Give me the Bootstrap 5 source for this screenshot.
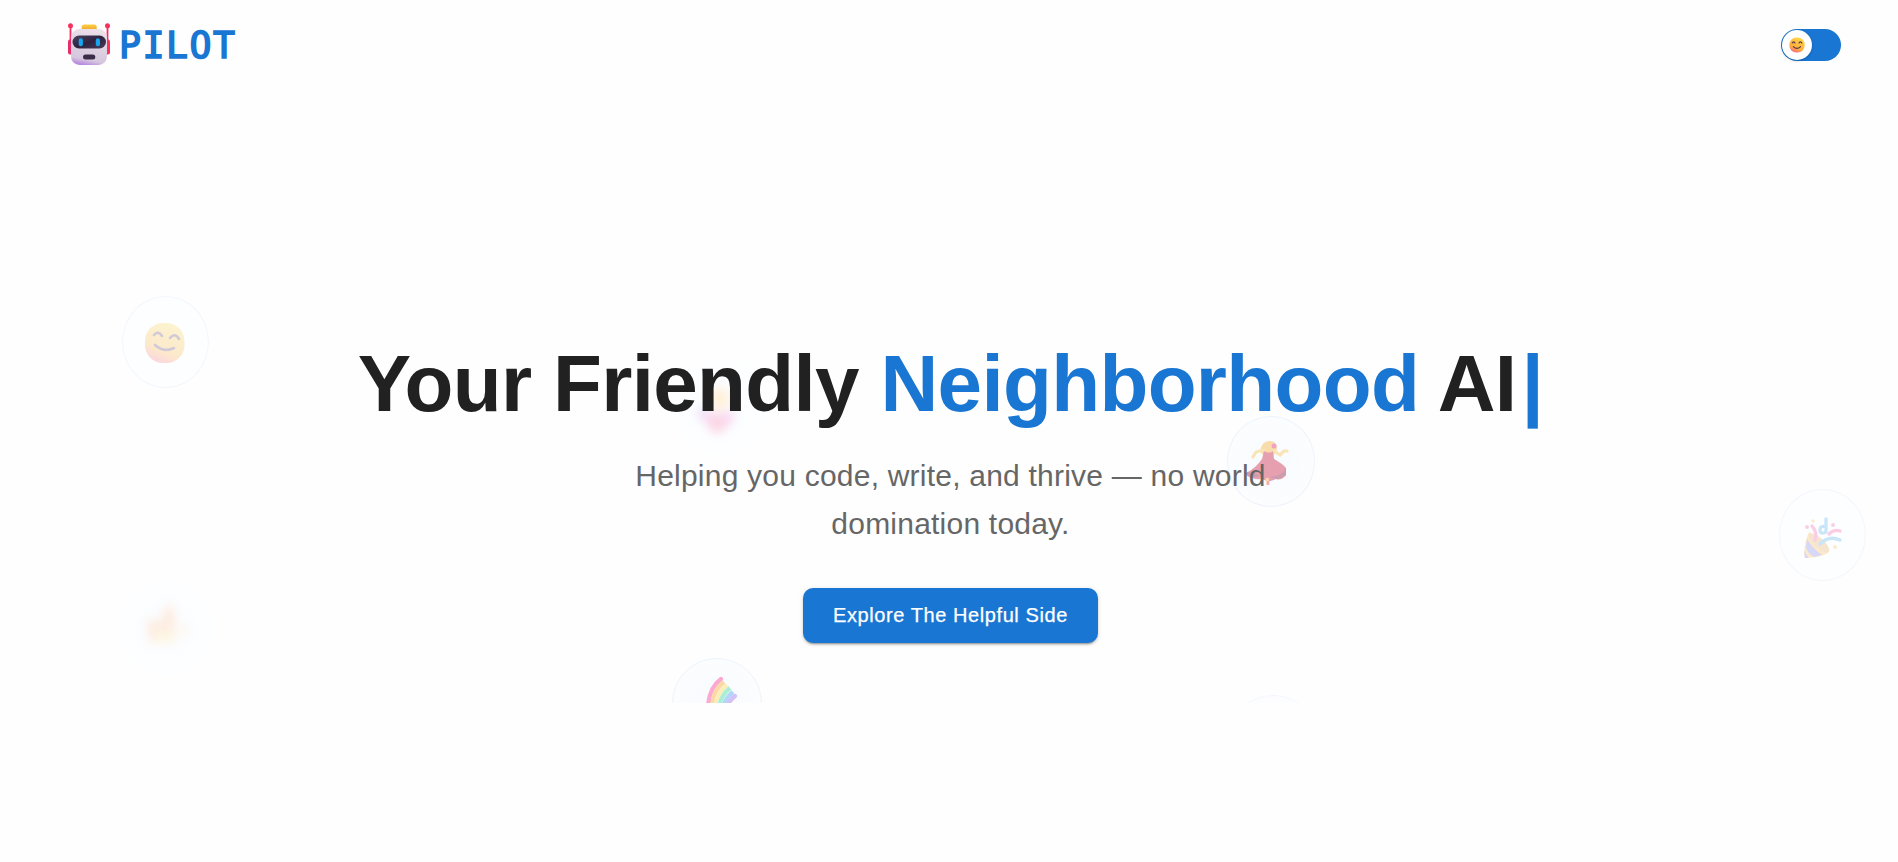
<!DOCTYPE html>
<html lang="en">
<head>
<meta charset="utf-8">
<meta name="viewport" content="width=device-width, initial-scale=1">
<title>Pilot</title>
<link href="https://cdn.jsdelivr.net/npm/bootstrap@5.3.0/dist/css/bootstrap.min.css" rel="stylesheet">
<style>
  body { font-family: "Liberation Sans", Arial, sans-serif; color: #212121; background: #fefefe; overflow: hidden; }
  .topbar { height: 90px; padding: 0 57px 0 66px; }
  .brand-name { font: 400 36.500px/1 "DejaVu Sans Mono", monospace; -webkit-text-stroke: 1.6px #1976d2; color: #1976d2; letter-spacing: 1.5px; margin: 2px 0 0 8px; }
  .mood { width: 60px; height: 32px; background: #1976d2; padding: 1px; }
  .mood-knob { width: 30px; height: 30px; background: #fff; box-shadow: 0 1px 3px rgba(0,0,0,.2); }
  .hero { height: 613px; padding: 246px 0 0 3px; }
  .hero-title { font-size: 80px; font-weight: 700; line-height: 96px; letter-spacing: -.66px; margin: 0 0 20px; }
  .accent { color: #1976d2; }
  .caret { margin-left: 5px; }
  .hero-sub { font-size: 30px; line-height: 48px; letter-spacing: .22px; color: #666; width: 700px; margin-bottom: 40px; }
  .hero-btn { font-size: 20px; line-height: 25px; padding: 15px 25px; border-radius: 10px; letter-spacing: .58px; width: 295px; height: 55px; border: 0;
    -webkit-text-stroke: .25px #fff;
    --bs-btn-bg: #1976d2; --bs-btn-color: #fff; box-shadow: 0 3px 1px -2px rgba(0,0,0,.2), 0 2px 2px rgba(0,0,0,.14), 0 1px 5px rgba(0,0,0,.12); }
  .bubble { border-radius: 50%; border: 1.5px solid #edf4fb; pointer-events: none; }
  .b-smile { left: 122px; top: 206px; width: 87px; height: 92px; }
  .b-dance { left: 1227px; top: 326px; width: 88px; height: 91px; }
  .b-party { left: 1779px; top: 399px; width: 87px; height: 92px; }
  .b-rain { left: 672px; top: 568px; width: 90px; height: 90px; }
  .b-thumb { left: 118px; top: 490px; width: 95px; height: 95px; }
  .b-heart { left: 674px; top: 269px; width: 92px; height: 96px; }
  .b-low { left: 1228px; top: 605px; width: 90px; height: 90px; }
  .b-smile, .b-party { background: #fcfeff; border-color: #f3f7fc; }
  .b-dance, .b-rain { background: radial-gradient(closest-side, #f8fbfe, #fbfdff); }
  .b-thumb, .b-heart { background: radial-gradient(closest-side, #fafcff, #fdfeff 90%); border-color: #fcfeff; }
  .b-low { background: #fdfdff; border-color: #f3f7fd; }
  .f-2 { opacity: .26; } .f-3 { opacity: .43; }
  .soft { filter: blur(5px); }
</style>
</head>
<body>
<nav class="topbar navbar flex-nowrap justify-content-between align-items-center">
  <a class="d-flex align-items-center text-decoration-none" href="#">
    <svg width="45" height="45" viewBox="0 .5 45 45">
      <defs>
        <linearGradient id="gFace" x1=".7" y1="0" x2=".3" y2="1"><stop offset="0" stop-color="#ffd84a"/><stop offset=".7" stop-color="#ffae3a"/><stop offset="1" stop-color="#f8638a"/></linearGradient>
        <linearGradient id="head" x1=".6" y1="0" x2=".4" y2="1"><stop offset="0" stop-color="#ece0ea"/><stop offset=".85" stop-color="#d5c7dd"/><stop offset="1" stop-color="#b98be0"/></linearGradient>
        <linearGradient id="hat" x1="0" y1="0" x2="0" y2="1"><stop offset="0" stop-color="#ffcf45"/><stop offset="1" stop-color="#e89a22"/></linearGradient>
        <linearGradient id="visor" x1="0" y1="0" x2="1" y2="1"><stop offset="0" stop-color="#49425c"/><stop offset=".5" stop-color="#30233f"/><stop offset="1" stop-color="#483b5d"/></linearGradient>
      </defs>
      <path d="M4.500 4v18M41.500 4v18" stroke="#f72c60" stroke-width="1.800"/>
      <circle cx="4.500" cy="3.300" r="2.500" fill="#f5315f"/><circle cx="41.500" cy="3.300" r="2.500" fill="#f5315f"/>
      <rect x="2" y="17" width="6" height="15" rx="2" fill="#e72e68"/><rect x="38" y="17" width="6" height="15" rx="2" fill="#ff315c"/>
      <rect x="15.700" y="2" width="15" height="7" rx="2.500" fill="url(#hat)"/>
      <rect x="5" y="6.500" width="36" height="36" rx="8.500" fill="url(#head)"/>
      <rect x="6.500" y="13" width="33.500" height="13" rx="6.500" fill="url(#visor)"/>
      <rect x="12.700" y="15.800" width="4.200" height="8" rx="2.100" fill="#16a5ee"/><rect x="29.800" y="15.800" width="4.200" height="8" rx="2.100" fill="#16a5ee"/>
      <rect x="17" y="32" width="12.300" height="5" rx="2.500" fill="#3b2d49"/>
    </svg>
    <span class="brand-name">PILOT</span>
  </a>
  <div class="mood rounded-pill">
    <div class="mood-knob rounded-circle d-flex align-items-center justify-content-center">
      <svg width="16" height="16" viewBox="0 0 40 40"><rect x="1" y="1" width="38" height="38" rx="17" fill="url(#gFace)"/><path d="M8 15q3-6 7 0M25 15q4-6 7 0M11 24q9 9 18 0" fill="none" stroke="#593751" stroke-width="3" stroke-linecap="round"/></svg>
    </div>
  </div>
</nav>
<main class="hero position-relative overflow-hidden d-flex flex-column align-items-center text-center">
  <div class="bubble b-smile position-absolute">
    <svg class="f-2 d-block" width="87" height="92" viewBox="0 0 87 92"><rect x="22" y="26" width="39.500" height="40" rx="18" fill="url(#gFace)"/><path d="M31 38q4-5 8 1M47 41q5-6 9 1M32 48q9 8 19 3" fill="none" stroke="#593768" stroke-width="2.600" stroke-linecap="round"/></svg>
  </div>
  <div class="bubble b-heart position-absolute">
    <svg class="soft d-block" width="90" height="94" viewBox="0 0 90 94"><circle cx="44" cy="39" r="11" fill="#fff1da"/><circle cx="28" cy="53" r="6" fill="#e8e6fb"/><path d="M25 51q17 5 35 0q-3 18-18 19q-12-2-17-19" fill="#f8d6f1"/><circle cx="42" cy="65" r="8" fill="#fcd6e2"/></svg>
  </div>
  <div class="bubble b-dance position-absolute">
    <svg class="f-3 d-block" width="85" height="88" viewBox="0 0 85 88">
      <g transform="translate(-3 -2)">
      <path d="M35 36q2-10 9-10q8 0 8 7q0 5-5 8q-6 2-9-1z" fill="#f8b43d"/>
      <path d="M39 35l-8 2l-3 5M49 36l6 4l4-4l3 0" fill="none" stroke="#fac65a" stroke-width="3.200" stroke-linecap="round" stroke-linejoin="round"/>
      <path d="M39 36q5 3 9 0l1 8q9 5 12 9l0 7q-5 6-10 4q-7 4-14 0q-7 1-9-1q-7-1-7-5q10-5 16-14z" fill="#cf294a"/>
      <path d="M61 53q-4 8-16 9q8 5 16-2zM22 57q8 0 13 4q-9 3-13-1" fill="#942148"/>
      <path d="M42 63l1 7" stroke="#fbb345" stroke-width="3"/><path d="M43 66l0 4" stroke="#ff3d65" stroke-width="2.500"/>
      <circle cx="49" cy="31" r="2.500" fill="#e83074"/>
      </g>
    </svg>
  </div>
  <div class="bubble b-party position-absolute">
    <svg class="f-2 d-block" width="87" height="92" viewBox="0 0 87 92">
      <path d="M29 42q4 1 12 8q9 8 8 12q-5 5-22 6q-3 0-3-4q1-14 5-22z" fill="#ffb13c"/>
      <path d="M27 49q6 10 15 16l-8 2q-7-4-8-10zM24 60q3 6 5 8h-4z" fill="#6f6ae0"/>
      <ellipse cx="39" cy="53" rx="5" ry="13" transform="rotate(-48 39 53)" fill="#e5a14b"/>
      <path d="M32 36q6 7 3 14M49 44q5-5 11-3" fill="none" stroke="#fb3f97" stroke-width="3.300" stroke-linecap="round"/>
      <path d="M40 54q9-9 20-4M46 29v13q-6 3-6-2t6-3" fill="none" stroke="#3ba4e8" stroke-width="3.300" stroke-linecap="round"/>
      <g fill="#f04d9d"><circle cx="27" cy="37" r="2"/><circle cx="53" cy="35" r="2"/></g><g fill="#f7bd38"><circle cx="33" cy="31" r="1.800"/><circle cx="55" cy="57" r="2"/></g>
    </svg>
  </div>
  <div class="bubble b-thumb position-absolute">
    <svg class="soft d-block opacity-50" width="93" height="93" viewBox="0 0 93 93"><path d="M30 37l12 5 3-15 9-3 2 17-1 21H32l-4-13z" fill="#ffdcc1"/><path d="M38 49h18v13H34z" fill="#fff0c9"/><circle cx="64" cy="49" r="6" fill="#fff2e5"/></svg>
  </div>
  <div class="bubble b-rain position-absolute">
    <svg class="f-3 d-block" width="87" height="87" viewBox="0 0 87 87" fill="none" stroke-width="4.300">
      <path d="M48 20q-12 9-13 28" stroke="#ff3c99" stroke-linecap="round"/><path d="M51 23q-12 9-12 27" stroke="#ffac35"/><path d="M54 26q-12 9-12 25" stroke="#ffdc60"/><path d="M57 29q-11 9-11 23" stroke="#49dc9d"/><path d="M60 33q-10 8-10 20" stroke="#55a6f6"/><path d="M62 37q-9 7-9 17" stroke="#a574ec" stroke-linecap="round"/>
    </svg>
  </div>
  <div class="bubble b-low position-absolute"></div>

  <h1 class="hero-title position-relative text-nowrap">Your Friendly <span class="accent">Neighborhood</span> AI<span class="accent caret">|</span></h1>
  <p class="hero-sub position-relative">Helping you code, write, and thrive — no world domination today.</p>
  <button class="btn hero-btn position-relative text-nowrap" type="button">Explore The Helpful Side</button>
</main>
<script src="https://cdn.jsdelivr.net/npm/bootstrap@5.3.0/dist/js/bootstrap.bundle.min.js"></script>
</body>
</html>
